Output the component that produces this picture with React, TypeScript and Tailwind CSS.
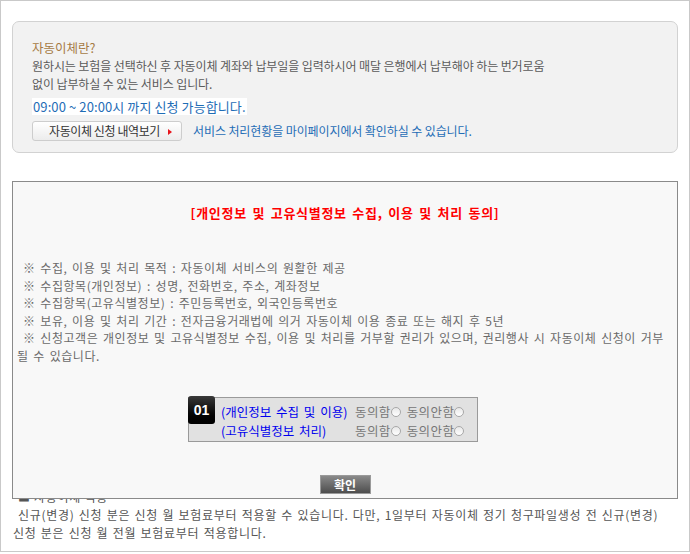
import React from "react";

const KR = "font-['Noto_Sans_CJK_KR','Noto_Sans',sans-serif]";

function Radio() {
  return (
    <span className="inline-block w-[10px] h-[10px] rounded-full border border-[#a8a8a8] bg-gradient-to-b from-[#e8e8e8] to-white align-middle" />
  );
}

const rows = [
  { label: "(개인정보 수집 및 이용)" },
  { label: "(고유식별정보 처리)" },
];

const notices = [
  "※ 수집, 이용 및 처리 목적 : 자동이체 서비스의 원활한 제공",
  "※ 수집항목(개인정보) : 성명, 전화번호, 주소, 계좌정보",
  "※ 수집항목(고유식별정보) : 주민등록번호, 외국인등록번호",
  "※ 보유, 이용 및 처리 기간 : 전자금융거래법에 의거 자동이체 이용 종료 또는 해지 후 5년",
];

export default function App() {
  return (
    <div className={`relative w-[690px] h-[554px] bg-white ${KR}`}>
      <div className="w-[690px] h-[552px] border border-[#c9c9c9] pt-[20px] px-[11px]">
        {/* 자동이체 안내 */}
        <div className="w-[666px] h-[132px] rounded-[7px] border border-[#d2d2d2] bg-[#f2f2f2] pl-[19px] pt-[17px]">
          <div className="text-[12.5px] leading-[18px] text-[#a67b45]">자동이체란?</div>
          <div className="text-[12px] leading-[18px] tracking-[-0.1px] text-[#5a5a5a]">
            원하시는 보험을 선택하신 후 자동이체 계좌와 납부일을 입력하시어 매달 은행에서 납부해야 하는 번거로움
          </div>
          <div className="text-[12px] leading-[17px] tracking-[-0.1px] text-[#5a5a5a]">없이 납부하실 수 있는 서비스 입니다.</div>
          <div className="mt-[1px]">
            <span className="inline-block bg-white px-[1px] text-[13px] leading-[17px] tracking-[0.1px] text-[#1f6db6]">
              09:00 ~ 20:00시 까지 신청 가능합니다.
            </span>
          </div>
          <div className="flex items-center mt-[4px]">
            <button className="relative w-[150px] h-[20px] rounded-[3px] border border-[#cdcdcd] bg-gradient-to-b from-white to-[#ececec] text-left pl-[16px] text-[12px] leading-[18px] tracking-[-0.4px] text-[#333]">
              자동이체 신청 내역보기
              <span className="absolute right-[9px] top-[7px] w-0 h-0 border-y-[3px] border-y-transparent border-l-[4px] border-l-[#e8141b]" />
            </button>
            <span className="ml-[11px] text-[12px] tracking-[-0.1px] text-[#1f6db6]">
              서비스 처리현황을 마이페이지에서 확인하실 수 있습니다.
            </span>
          </div>
        </div>

        {/* 안내 문구 (레이어 아래) */}
        <div className="mt-[335px] text-[12px] leading-[18px] tracking-[0.7px] text-[#555] whitespace-nowrap pl-[1px]">
          <p className="indent-[5px]">■ 자동이체 적용</p>
          <p className="indent-[5px] [word-spacing:1px]">
            신규(변경) 신청 분은 신청 월 보험료부터 적용할 수 있습니다. 다만, 1일부터 자동이체 정기 청구파일생성 전 신규(변경)
          </p>
          <p className="[word-spacing:1px]">신청 분은 신청 월 전월 보험료부터 적용합니다.</p>
        </div>
      </div>

      {/* 동의 레이어 */}
      <div className="absolute left-[12px] top-[181px] w-[666px] h-[318px] border border-[#8a8a8a] bg-[#f8f8f8] flex flex-col">
        <div className="pt-[23px] text-center text-[13px] leading-[16px] font-bold tracking-[0.7px] text-[#ff0000] [word-spacing:2px]">
          [개인정보 및 고유식별정보 수집, 이용 및 처리 동의]
        </div>
        <div className="mt-[38px] pl-[4px] text-[12px] leading-[17.5px] tracking-[0.55px] text-[#6a6a6a] whitespace-nowrap [word-spacing:1.5px]">
          {notices.map((n) => (
            <p key={n} className="indent-[6px]">{n}</p>
          ))}
          <p className="indent-[6px]">
            ※ 신청고객은 개인정보 및 고유식별정보 수집, 이용 및 처리를 거부할 권리가 있으며, 권리행사 시 자동이체 신청이 거부
            <br />될 수 있습니다.
          </p>
        </div>

        <div className="mt-[33px] ml-[175px] w-[290px] h-[45px] border border-[#9a9a9a] bg-[#e1e1e1] flex">
          <div className="-mt-[2px] -ml-[1px] w-[27px] h-[28px] rounded-[3px] bg-gradient-to-b from-[#3a3a3a] to-black flex items-center justify-center text-white text-[14px] font-bold font-['Liberation_Sans',sans-serif]">
            01
          </div>
          <div className="ml-[6px] pt-[4px] text-[12.5px] leading-[19px] whitespace-nowrap">
            {rows.map((r) => (
              <div key={r.label} className="flex">
                <span className="w-[134px] text-[#0000ee] [word-spacing:2px]">{r.label}</span>
                <span className="text-[#777] tracking-[0.4px]">동의함</span>
                <span className="flex items-center"><Radio /></span>
                <span className="ml-[6px] text-[#777] tracking-[0.4px]">동의안함</span>
                <span className="flex items-center"><Radio /></span>
              </div>
            ))}
          </div>
        </div>

        <div className="mt-auto pb-[4px] flex justify-center">
          <button className="w-[51px] h-[19px] border border-[#9a9a9a] bg-gradient-to-b from-[#8a8a8a] to-[#4e4e4e] text-white text-[12px] font-bold leading-[17px]">
            확인
          </button>
        </div>
      </div>
    </div>
  );
}
